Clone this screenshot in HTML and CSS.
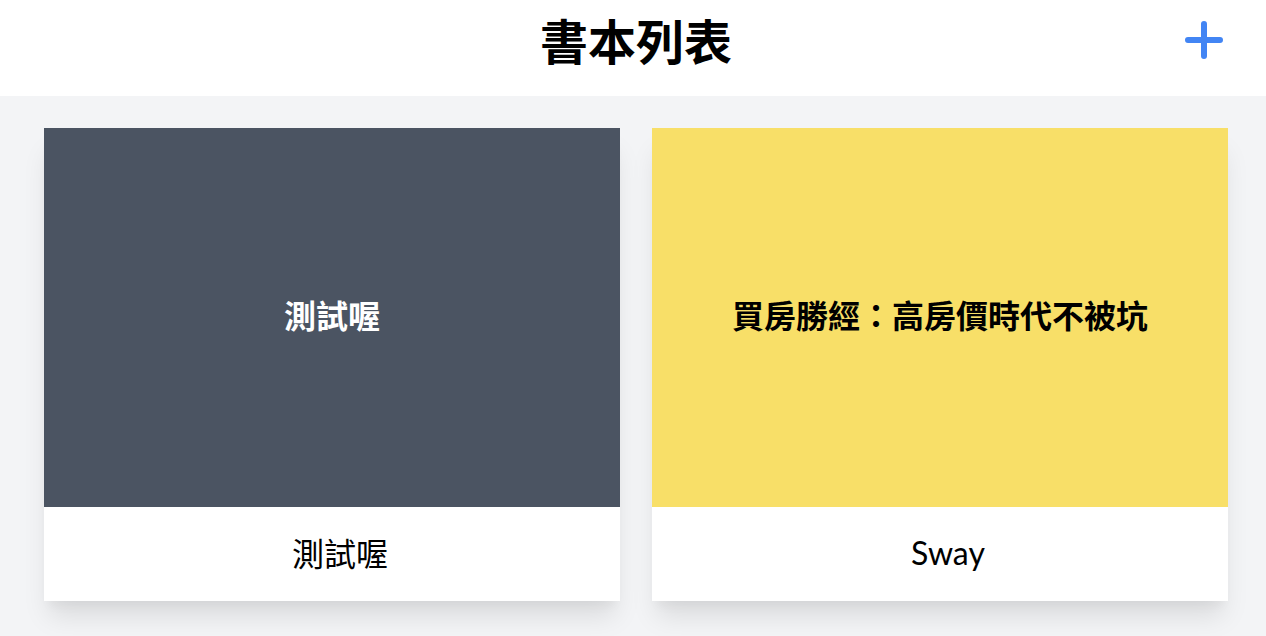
FILE: index.html
```html
<!DOCTYPE html>
<html lang="zh-Hant">
<head>
<meta charset="utf-8">
<title>書本列表</title>
<link rel="stylesheet" href="styles.css">
</head>
<body>
<header class="topbar">
  <h1 class="title">書本列表</h1>
  <button class="add-btn" aria-label="新增">
    <svg viewBox="0 0 24 24" width="48" height="48" fill="none" stroke="currentColor" stroke-width="3" stroke-linecap="round" stroke-linejoin="round"><path d="M12 4v16m8-8H4"/></svg>
  </button>
</header>
<main class="book-grid">
  <article class="book-card">
    <div class="cover cover-dark"><span class="cover-title">測試喔</span></div>
    <div class="book-footer">測試喔</div>
  </article>
  <article class="book-card">
    <div class="cover cover-yellow"><span class="cover-title">買房勝經：高房價時代不被坑</span></div>
    <div class="book-footer">Sway</div>
  </article>
</main>
</body>
</html>
```

FILE: styles.css
```css
* { box-sizing: border-box; }
html, body { margin: 0; padding: 0; }
body {
  background: #f3f4f6;
  font-family: "Noto Sans CJK TC", "Noto Sans", sans-serif;
  color: #111;
  height: 636px;
  overflow: hidden;
}
.topbar {
  background: #fff;
  height: 96px;
  padding: 16px 38px 0 44px;
  display: grid;
  grid-template-columns: 1fr auto 1fr;
  align-items: start;
}
.title {
  grid-column: 2;
  margin: -3px 0 0;
  font-size: 48px;
  line-height: 52px;
  font-weight: 700;
  color: #000;
}
.add-btn {
  grid-column: 3;
  justify-self: end;
  width: 48px;
  height: 48px;
  padding: 0;
  border: 0;
  background: none;
  color: #4285f4;
  display: flex;
}
.book-grid {
  display: grid;
  grid-template-columns: 1fr 1fr;
  gap: 32px;
  padding: 32px 38px 0 44px;
}
.book-card {
  background: #fff;
  box-shadow: 0 20px 25px -5px rgba(0,0,0,0.1), 0 10px 10px -5px rgba(0,0,0,0.04);
}
.cover {
  height: 379px;
  display: flex;
  align-items: center;
  justify-content: center;
  padding-bottom: 7px;
}
.cover-dark { background: #4b5462; color: #fff; }
.cover-yellow { background: #f8df68; color: #000; }
.cover-title {
  font-size: 32px;
  font-weight: 700;
  line-height: 1;
}
.book-footer {
  height: 94px;
  display: flex;
  align-items: center;
  justify-content: center;
  font-family: "Lato", "Noto Sans CJK TC", sans-serif;
  font-size: 32px;
  color: #000;
  padding: 0 0 4px 16px;
}
```
